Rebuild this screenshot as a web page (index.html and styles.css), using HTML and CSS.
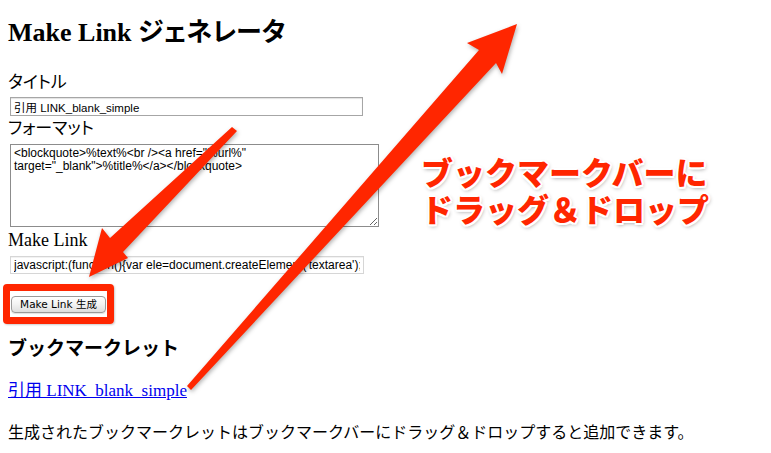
FILE: index.html
```html
<!DOCTYPE html>
<html lang="ja">
<head>
<meta charset="utf-8">
<title>Make Link ジェネレータ</title>
<link rel="stylesheet" href="styles.css">
</head>
<body>
<div class="page">
  <h1 class="title">Make Link ジェネレータ</h1>
  <div class="label">タイトル</div>
  <input class="field field-title" type="text" value="引用 LINK_blank_simple">
  <div class="label label-tight">フォーマット</div>
  <textarea class="format">&lt;blockquote&gt;%text%&lt;br /&gt;&lt;a href="%url%" target="_blank"&gt;%title%&lt;/a&gt;&lt;/blockquote&gt;</textarea>
  <div class="label label-latin">Make Link</div>
  <input class="field field-code" type="text" value="javascript:(function(){var ele=document.createElement('textarea');ele.value=''">
  <button class="make-btn" type="button">Make Link 生成</button>
  <h3 class="sub">ブックマークレット</h3>
  <div class="link-row"><a class="bm-link" href="#">引用 LINK_blank_simple</a></div>
  <p class="note">生成されたブックマークレットはブックマークバーにドラッグ＆ドロップすると追加できます。</p>
</div>

<div class="red-box"></div>

<svg class="arrows" width="771" height="453" viewBox="0 0 771 453">
  <polygon points="187,386 479,50 467,43 517,24 502,74 496,63 191,390" />
  <polygon points="232,127 237,131 123,252 128,258 89,277 102,228 110,238" />
</svg>

<div class="callout">
  <div class="callout-line">ブックマークバーに</div>
  <div class="callout-line">ドラッグ＆ドロップ</div>
</div>
</body>
</html>
```

FILE: styles.css
```css
html, body {
  margin: 0;
  padding: 0;
  background: #fff;
}

body {
  font-family: "Liberation Serif", "Noto Sans CJK JP", serif;
  color: #000;
  width: 771px;
  height: 453px;
  overflow: hidden;
  position: relative;
}

.page {
  padding: 0 8px;
  display: flex;
  flex-direction: column;
  align-items: flex-start;
}

.title {
  margin: 18px 0 0;
  font-size: 26px;
  line-height: 30px;
  font-weight: bold;
  font-feature-settings: "palt";
}

.label {
  margin-top: 25px;
  font-size: 17px;
  line-height: 20px;
  font-feature-settings: "palt";
}

.label-tight {
  margin-top: 3px;
}

.label-latin {
  margin-top: 3px;
  font-size: 18px;
}

.field {
  box-sizing: border-box;
  margin: 4px 0 0 2px;
  padding: 0 3px;
  font-family: "Liberation Sans", "Noto Sans CJK JP", sans-serif;
  font-size: 12px;
  color: #000;
  background: #fff;
  outline: none;
}

.field-title {
  width: 353px;
  height: 19px;
  font-size: 11.5px;
  border: 1px solid #a6a6a6;
  box-shadow: inset 0 1px 1px rgba(0,0,0,0.12);
}

.field-code {
  margin-top: 6px;
  width: 354px;
  height: 18px;
  border: 1px solid #d6d6d6;
  box-shadow: inset 0 1px 0 rgba(0,0,0,0.05);
}

.format {
  box-sizing: border-box;
  margin: 5px 0 0 2px;
  width: 369px;
  height: 83px;
  padding: 2px 3px;
  border: 1px solid #8c8c8c;
  font-family: "Liberation Sans", "Noto Sans CJK JP", sans-serif;
  font-size: 12px;
  line-height: 12.5px;
  color: #000;
  overflow: hidden;
  outline: none;
}

.make-btn {
  box-sizing: border-box;
  margin: 22px 0 0 3px;
  width: 95px;
  height: 17px;
  padding: 0;
  border: 1px solid #9a9a9a;
  border-radius: 4px;
  background: linear-gradient(#ffffff, #f2f2f2 50%, #dedede);
  box-shadow: 0 1px 1px rgba(0,0,0,0.12);
  font-family: "DejaVu Sans", "Noto Sans CJK JP", sans-serif;
  font-size: 10.5px;
  line-height: 15px;
  color: #000;
}

.sub {
  margin: 25px 0 0;
  font-size: 19px;
  line-height: 22px;
  font-weight: bold;
}

.link-row {
  margin-top: 21px;
  font-size: 17px;
  line-height: 20px;
}

.bm-link {
  color: #0000ee;
  text-decoration: underline;
}

.note {
  margin: 22px 0 0;
  font-size: 16px;
  line-height: 20px;
}

.red-box {
  position: absolute;
  left: 3px;
  top: 284px;
  width: 111px;
  height: 40px;
  box-sizing: border-box;
  border: 7px solid #ff2600;
  border-radius: 4px;
  box-shadow: 1px 1px 2px rgba(0,0,0,0.2);
}

.arrows {
  position: absolute;
  left: 0;
  top: 0;
  filter: drop-shadow(1px 2px 2px rgba(0,0,0,0.3));
}

.arrows polygon {
  fill: #ff2600;
}

.callout {
  position: absolute;
  left: 421px;
  top: 153px;
  display: flex;
  flex-direction: column;
  font-family: "Noto Sans CJK JP", sans-serif;
  font-weight: 900;
  font-size: 32px;
  color: #ff2600;
  white-space: nowrap;
  text-shadow:
    2px 0 0 #fff, -2px 0 0 #fff, 0 2px 0 #fff, 0 -2px 0 #fff,
    1.5px 1.5px 0 #fff, -1.5px -1.5px 0 #fff, 1.5px -1.5px 0 #fff, -1.5px 1.5px 0 #fff,
    1px 2px 4px rgba(0,0,0,0.45);
}

.callout-line {
  height: 37px;
  line-height: 37px;
}
```
